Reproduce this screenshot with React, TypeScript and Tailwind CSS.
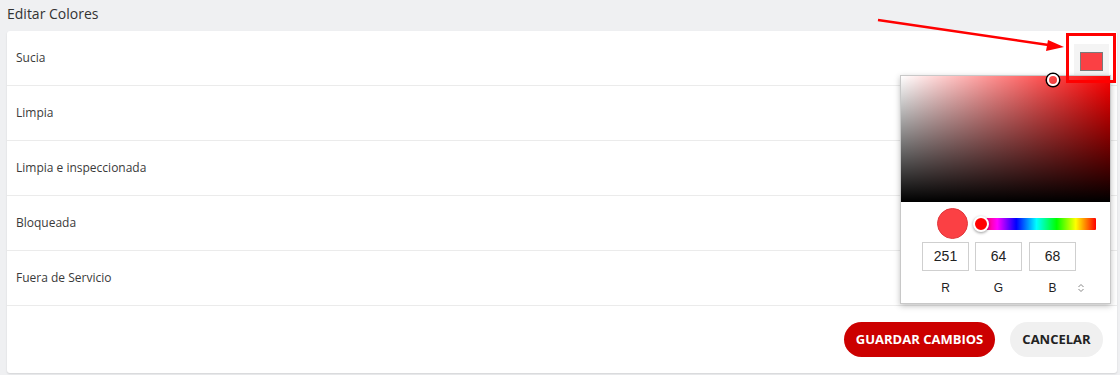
import React from "react";

const rows = ["Sucia", "Limpia", "Limpia e inspeccionada", "Bloqueada", "Fuera de Servicio"];

function Picker() {
  return (
    <div className="absolute left-[893px] top-[44px] w-[211px] bg-white border border-[#c8c8c8] shadow-[0_2px_6px_rgba(0,0,0,0.25)] z-10">
      <div className="relative h-[126px] w-full bg-[#ff0000]">
        <div className="absolute inset-0 bg-gradient-to-r from-white to-transparent" />
        <div className="absolute inset-0 bg-gradient-to-b from-transparent to-black" />
        <div className="absolute left-[146px] top-[-2px] w-[12px] h-[12px] rounded-full border-2 border-white shadow-[0_0_0_1.5px_#000]" />
      </div>
      <div className="flex items-center pt-[3px] pl-[36px] pr-[14px] h-[30px] mt-[5px]">
        <div className="w-[31px] h-[31px] rounded-full bg-[#fb4044] border border-[#e0393d] shrink-0" />
        <div className="relative ml-[9px] flex-1 h-[12px] rounded-[1px] bg-[linear-gradient(to_right,#f00_0%,#f0f_17%,#00f_33%,#0ff_50%,#0f0_67%,#ff0_83%,#f00_100%)]">
          <div className="absolute left-[-4px] top-[-2px] w-[16px] h-[16px] rounded-full bg-[#ff0000] border-[2px] border-white shadow-[0_1px_3px_rgba(0,0,0,0.4)]" />
        </div>
      </div>
      <div className="flex gap-[6px] pl-[21px] mt-[5px] font-['Liberation_Sans',Arial,sans-serif]">
        {["251", "64", "68"].map((v, i) => (
          <div
            key={i}
            className={`w-[47px] h-[29px] border border-[#cfcfcf] flex items-center justify-center text-[14px] text-[#222] ${i === 2 ? "ml-[1px]" : ""}`}
          >
            {v}
          </div>
        ))}
      </div>
      <div className="flex pl-[21px] mt-[8px] pb-[6px] text-[12px] text-[#222] font-['Liberation_Sans',Arial,sans-serif] items-center">
        <div className="w-[47px] text-center">R</div>
        <div className="w-[47px] ml-[6px] text-center">G</div>
        <div className="w-[47px] ml-[7px] text-center">B</div>
        <svg width="8" height="10" viewBox="0 0 8 10" className="ml-[1px]">
          <path d="M1.5 4 L4 1.5 L6.5 4" fill="none" stroke="#888" strokeWidth="1" />
          <path d="M1.5 6 L4 8.5 L6.5 6" fill="none" stroke="#888" strokeWidth="1" />
        </svg>
      </div>
    </div>
  );
}

export default function App() {
  return (
    <div className="relative w-[1120px] h-[375px] bg-[#eff0f2] overflow-hidden font-['Open_Sans','Noto_Sans',sans-serif]">
      <div className="h-[31px] pl-[7px] pt-[4px] text-[14px] text-[#333] leading-[20px]">Editar Colores</div>
      <div className="relative ml-[7px] w-[1110px] bg-white rounded-[3px] shadow-[0_1px_2px_rgba(0,0,0,0.12)]">
        {rows.map((r, i) => (
          <div key={r} className="flex items-center justify-between h-[55px] border-b border-[#ebebeb] pl-[9px] pr-[8px]">
            <span className="text-[12px] text-[#3a3a3a]">{r}</span>
            {i === 0 && (
              <div className="w-[35px] h-[35px] bg-[#f4f4f4] flex items-center justify-center mt-[6px]">
                <div className="w-[23px] h-[19px] bg-[#fb4044] border border-[#7a7a7a]" />
              </div>
            )}
          </div>
        ))}
        <div className="flex justify-end items-center gap-[15px] h-[67px] pr-[14px]">
          <button className="h-[35px] w-[151px] rounded-full bg-[#cc0000] text-white text-[13px] font-bold">
            GUARDAR CAMBIOS
          </button>
          <button className="h-[35px] w-[93px] rounded-full bg-[#f0f0f0] text-[#222] text-[13px] font-bold">
            CANCELAR
          </button>
        </div>
        <Picker />
      </div>
      <svg className="absolute left-0 top-0 pointer-events-none z-20" width="1120" height="375">
        <line x1="878" y1="20" x2="1052" y2="45.5" stroke="#ff0000" strokeWidth="2.5" />
        <polygon points="1064,47 1048,40 1046,51" fill="#ff0000" />
        <rect x="1067.5" y="34.5" width="47" height="47" fill="none" stroke="#ff0000" strokeWidth="3" />
      </svg>
    </div>
  );
}
